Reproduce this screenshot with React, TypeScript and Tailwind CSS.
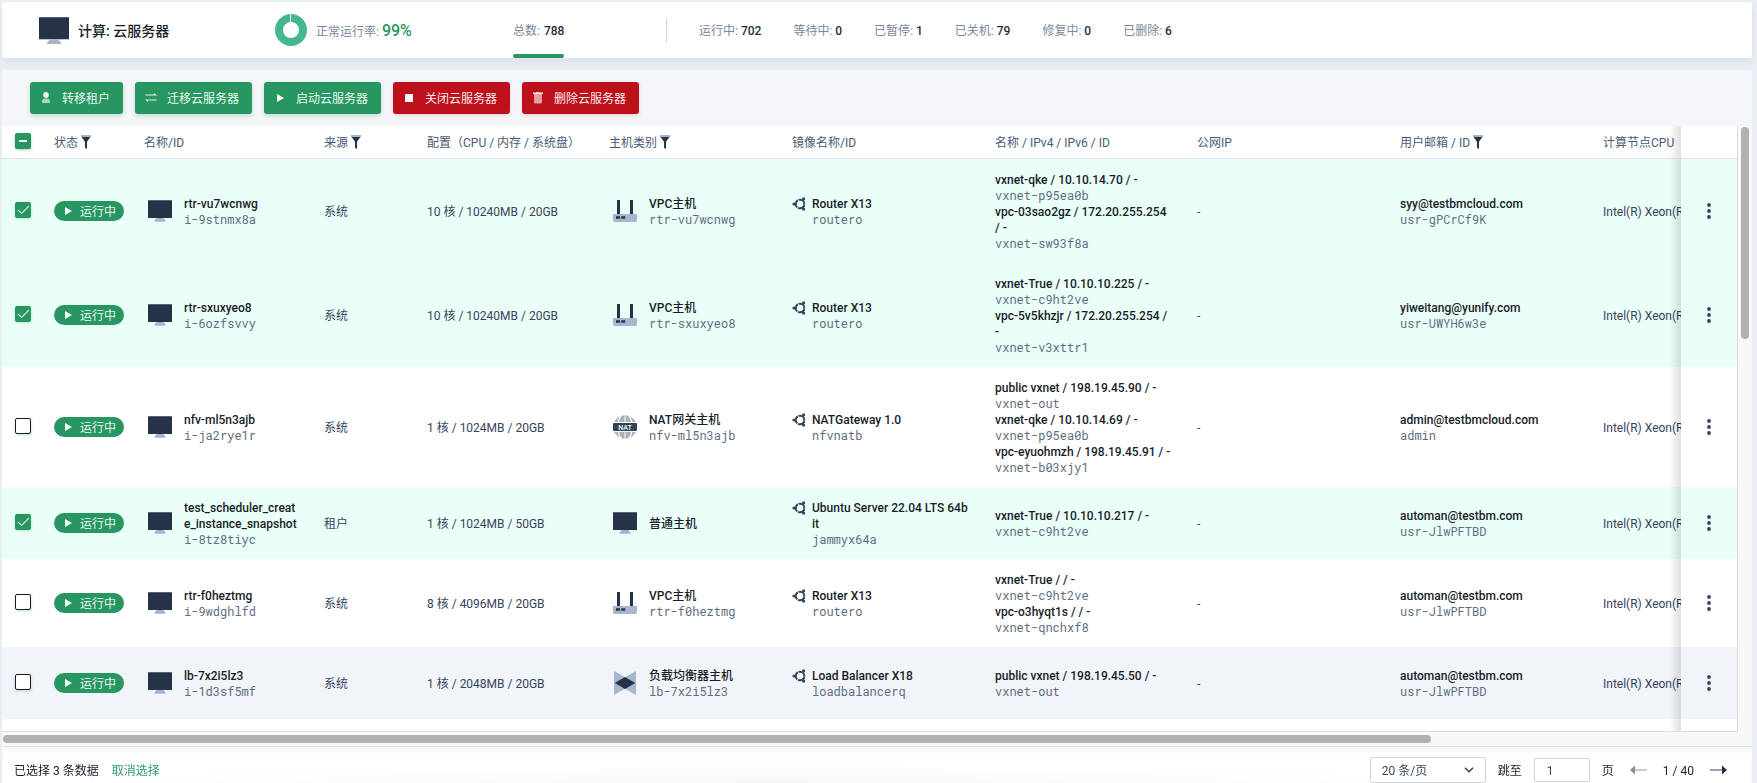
import React, { useState } from "react";

type Net = { label: string; id: string };
type HostKind = "vpc" | "nat" | "normal" | "lb";
type Server = {
  name: string;
  id: string;
  source: string;
  spec: string;
  kind: HostKind;
  kindLabel: string;
  kindId?: string;
  image: string;
  imageId: string;
  nets: Net[];
  user: string;
  userId: string;
};

const servers: Server[] = [
  {
    name: "rtr-vu7wcnwg", id: "i-9stnmx8a", source: "系统", spec: "10 核 / 10240MB / 20GB",
    kind: "vpc", kindLabel: "VPC主机", kindId: "rtr-vu7wcnwg", image: "Router X13", imageId: "routero",
    nets: [
      { label: "vxnet-qke / 10.10.14.70 / -", id: "vxnet-p95ea0b" },
      { label: "vpc-03sao2gz / 172.20.255.254 / -", id: "vxnet-sw93f8a" },
    ],
    user: "syy@testbmcloud.com", userId: "usr-gPCrCf9K",
  },
  {
    name: "rtr-sxuxyeo8", id: "i-6ozfsvvy", source: "系统", spec: "10 核 / 10240MB / 20GB",
    kind: "vpc", kindLabel: "VPC主机", kindId: "rtr-sxuxyeo8", image: "Router X13", imageId: "routero",
    nets: [
      { label: "vxnet-True / 10.10.10.225 / -", id: "vxnet-c9ht2ve" },
      { label: "vpc-5v5khzjr / 172.20.255.254 / -", id: "vxnet-v3xttr1" },
    ],
    user: "yiweitang@yunify.com", userId: "usr-UWYH6w3e",
  },
  {
    name: "nfv-ml5n3ajb", id: "i-ja2rye1r", source: "系统", spec: "1 核 / 1024MB / 20GB",
    kind: "nat", kindLabel: "NAT网关主机", kindId: "nfv-ml5n3ajb", image: "NATGateway 1.0", imageId: "nfvnatb",
    nets: [
      { label: "public vxnet / 198.19.45.90 / -", id: "vxnet-out" },
      { label: "vxnet-qke / 10.10.14.69 / -", id: "vxnet-p95ea0b" },
      { label: "vpc-eyuohmzh / 198.19.45.91 / -", id: "vxnet-b03xjy1" },
    ],
    user: "admin@testbmcloud.com", userId: "admin",
  },
  {
    name: "test_scheduler_create_instance_snapshot", id: "i-8tz8tiyc", source: "租户", spec: "1 核 / 1024MB / 50GB",
    kind: "normal", kindLabel: "普通主机", image: "Ubuntu Server 22.04 LTS 64bit", imageId: "jammyx64a",
    nets: [{ label: "vxnet-True / 10.10.10.217 / -", id: "vxnet-c9ht2ve" }],
    user: "automan@testbm.com", userId: "usr-JlwPFTBD",
  },
  {
    name: "rtr-f0heztmg", id: "i-9wdghlfd", source: "系统", spec: "8 核 / 4096MB / 20GB",
    kind: "vpc", kindLabel: "VPC主机", kindId: "rtr-f0heztmg", image: "Router X13", imageId: "routero",
    nets: [
      { label: "vxnet-True / / -", id: "vxnet-c9ht2ve" },
      { label: "vpc-o3hyqt1s / / -", id: "vxnet-qnchxf8" },
    ],
    user: "automan@testbm.com", userId: "usr-JlwPFTBD",
  },
  {
    name: "lb-7x2i5lz3", id: "i-1d3sf5mf", source: "系统", spec: "1 核 / 2048MB / 20GB",
    kind: "lb", kindLabel: "负载均衡器主机", kindId: "lb-7x2i5lz3", image: "Load Balancer X18", imageId: "loadbalancerq",
    nets: [{ label: "public vxnet / 198.19.45.50 / -", id: "vxnet-out" }],
    user: "automan@testbm.com", userId: "usr-JlwPFTBD",
  },
];

function Monitor({ className }: { className: string }) {
  return (
    <svg viewBox="0 0 30 27" className={className} aria-hidden="true">
      <path d="M0 0h30v22.3H0z" fill="#263246" />
      <path d="M0 0h30v.8H0z" fill="#5d6b80" />
      <path d="M11 22.3h8l3 3.4v1.3H8v-1.3z" fill="#a4b4c8" />
    </svg>
  );
}

function VpcIcon() {
  return (
    <svg viewBox="0 0 24 22" className="h-[22px] w-6 shrink-0" aria-hidden="true">
      <path d="M4 0h3v14H4zM17 0h3v14h-3z" fill="#263246" />
      <path d="M0 14h24v6a2 2 0 0 1-2 2H2a2 2 0 0 1-2-2z" fill="#a4b7ce" />
      <path d="M3 16.2h4v2.6H3zM8.2 16.2h4v2.6h-4z" fill="#263246" />
    </svg>
  );
}

function NatIcon() {
  return (
    <svg viewBox="0 0 24 24" className="h-6 w-6 shrink-0" aria-hidden="true">
      <circle cx="12" cy="12" r="11.8" fill="#a9b1ba" />
      <path d="M8.500 0Q5.400 4 4.800 9M15.500 0Q18.600 4 19.200 9M4.800 15Q5.400 20 8.500 24M19.200 15Q18.600 20 15.500 24" stroke="#fff" strokeWidth="1.300" fill="none" />
      <path d="M12 0v24" stroke="#fff" strokeWidth="1" />
      <path d="M0 7h24v10H0z" fill="#fff" />
      <path d="M1 8h22a1 1 0 0 1 1 1v6a1 1 0 0 1-1 1H1a1 1 0 0 1-1-1V9a1 1 0 0 1 1-1z" fill="#324558" />
      <text x="12" y="14.500" textAnchor="middle" fontSize="7" fontWeight="500" fill="#fff">NAT</text>
    </svg>
  );
}

function LbIcon() {
  return (
    <svg viewBox="0 0 24 24" className="h-6 w-6 shrink-0" aria-hidden="true">
      <path d="M1 0l11 6.200L23 0v24l-11-6.200L1 24z" fill="#a4b7ce" />
      <path d="M12 6l10.200 6L12 18 1.800 12z" fill="#263246" />
    </svg>
  );
}

function UbuntuIcon() {
  return (
    <svg viewBox="0 0 14 14" className="mt-[2px] h-[14px] w-[14px] shrink-0" aria-hidden="true">
      <circle cx="8" cy="7" r="4.300" fill="none" stroke="#324558" strokeWidth="2" strokeDasharray="8.200 .8" strokeDashoffset="-.4" />
      <circle cx="2" cy="7" r="1.600" fill="#324558" />
      <circle cx="11.600" cy="1.900" r="1.600" fill="#324558" />
      <circle cx="11.600" cy="12.100" r="1.600" fill="#324558" />
    </svg>
  );
}

function Funnel() {
  return (
    <svg viewBox="0 0 10 14" className="h-[14px] w-[10px] shrink-0" aria-hidden="true">
      <path d="M0 0h10v2.400H0z" fill="#a4b4c8" />
      <path d="M.6 2h8.800L6 6.800V14l-2-1.200V6.800z" fill="#263246" />
    </svg>
  );
}

function HostIcon({ kind }: { kind: HostKind }) {
  if (kind === "vpc") return <VpcIcon />;
  if (kind === "nat") return <NatIcon />;
  if (kind === "lb") return <LbIcon />;
  return <Monitor className="h-[22px] w-6 shrink-0" />;
}

function ActionIcon({ name }: { name: string }) {
  return (
    <svg viewBox="0 0 16 16" className="h-4 w-4" aria-hidden="true">
      {name === "user" && (
        <>
          <path d="M8 2a2.700 2.700 0 0 1 2.700 2.700v.6a2.700 2.700 0 0 1-5.400 0v-.6A2.700 2.700 0 0 1 8 2z" fill="#fff" fillOpacity=".9" />
          <path d="M4 13v-1.500A3.300 3.300 0 0 1 7.300 8.500h1.400A3.300 3.300 0 0 1 12 11.500V13z" fill="#fff" fillOpacity=".6" />
        </>
      )}
      {name === "swap" && (
        <>
          <path d="M2.500 4.500H11V3l3 2.500H2.500z" fill="#fff" fillOpacity=".9" />
          <path d="M13.500 10.500H5V12L2 9.500h11.500z" fill="#fff" fillOpacity=".9" />
        </>
      )}
      {name === "play" && <path d="M5 4l7 4-7 4z" fill="#fff" />}
      {name === "stop" && <path d="M4 4h8v8H4z" fill="#fff" />}
      {name === "trash" && (
        <>
          <path d="M3 2.500h3.500V2h3v.5H13V4H3z" fill="#fff" fillOpacity=".9" />
          <path d="M4 4h8v8a1.500 1.500 0 0 1-1.500 1.500h-5A1.500 1.500 0 0 1 4 12z" fill="#fff" fillOpacity=".6" />
        </>
      )}
    </svg>
  );
}

const actions = [
  { label: "转移租户", icon: "user", danger: false },
  { label: "迁移云服务器", icon: "swap", danger: false },
  { label: "启动云服务器", icon: "play", danger: false },
  { label: "关闭云服务器", icon: "stop", danger: true },
  { label: "删除云服务器", icon: "trash", danger: true },
];

const stats = [
  ["运行中", "702"],
  ["等待中", "0"],
  ["已暂停", "1"],
  ["已关机", "79"],
  ["修复中", "0"],
  ["已删除", "6"],
];

const columns = [
  { label: "状态", filter: true, width: "w-[90px]" },
  { label: "名称/ID", width: "w-[180px]" },
  { label: "来源", filter: true, width: "w-[103px]" },
  { label: "配置（CPU / 内存 / 系统盘）", width: "w-[182px]" },
  { label: "主机类别", filter: true, width: "w-[183px]" },
  { label: "镜像名称/ID", width: "w-[203px]" },
  { label: "名称 / IPv4 / IPv6 / ID", width: "w-[202px]" },
  { label: "公网IP", width: "w-[203px]" },
  { label: "用户邮箱 / ID", filter: true, width: "w-[203px]" },
  { label: "计算节点CPU", width: "" },
];

const title = "pt-px font-medium text-[#181d28]";
const mono = "font-['Roboto_Mono','Liberation_Mono',monospace] leading-[15px] text-[#5f6d80]";
const plain = "pt-[14px] pb-3 pl-3";
const edge =
  "before:absolute before:inset-y-0 before:-left-3 before:w-3 before:bg-linear-to-r before:from-transparent before:to-black/12 before:content-['']";

function Check({ label, checked, onChange }: { label: string; checked: boolean; onChange: () => void }) {
  return (
    <label className="relative block h-4 w-4">
      <input
        type="checkbox"
        aria-label={label}
        checked={checked}
        onChange={onChange}
        className="block h-4 w-4 appearance-none rounded-[2px] border border-[#181d28] bg-white shadow-[0_1px_3px_rgba(39,150,96,0.3)] checked:border-[#279660] checked:bg-[#279660]"
      />
      {checked && (
        <svg viewBox="0 0 16 16" className="pointer-events-none absolute inset-0 h-4 w-4" aria-hidden="true">
          <path d="M3 8l3.500 3.500L14 4" fill="none" stroke="#d4ece0" strokeWidth="1.100" />
        </svg>
      )}
    </label>
  );
}

export default function App() {
  const [selected, setSelected] = useState<number[]>([0, 1, 3]);
  const toggle = (i: number) =>
    setSelected((s) => (s.includes(i) ? s.filter((x) => x !== i) : [...s, i]));

  return (
    <div className="flex h-screen flex-col gap-3 overflow-hidden bg-[#e9edf4] pt-[2px] pr-[5px] pl-[2px] font-[Roboto,'Noto_Sans_CJK_SC',sans-serif] text-xs leading-4 text-[#36435c]">
      <header className="flex h-14 shrink-0 items-center rounded-[3px] bg-white pl-[37px] shadow-[0_4px_8px_rgba(36,46,66,0.06)]">
        <div className="flex w-[236px] items-center gap-[9px]">
          <Monitor className="h-[27px] w-[30px]" />
          <h1 className="pt-[2px] text-sm font-medium text-[#181d28]">计算: 云服务器</h1>
        </div>
        <div className="flex w-[238px] items-center gap-[9px]">
          <svg viewBox="0 0 32 32" className="h-8 w-8" aria-hidden="true">
            <circle cx="16" cy="16" r="12" fill="none" stroke="#45b78e" strokeWidth="8" />
            <path d="M15.500 0v8" stroke="#fff" strokeWidth="1" />
          </svg>
          <p className="pt-[2px] text-[#79879c]">
            正常运行率: <strong className="text-base font-medium text-[#279660]">99%</strong>
          </p>
        </div>
        <div className="flex w-[153px] self-stretch">
          <a href="#all" className="flex flex-col text-[#79879c]">
            <span className="flex flex-1 items-center gap-1 pt-[6px]">
              总数: <strong className="font-medium text-[#242e42]">788</strong>
            </span>
            <span className="h-1 rounded-full bg-[#279660]" />
          </a>
        </div>
        <ul className="flex items-center gap-8 border-l border-[#ccd3db] pt-[5px] pb-[3px] pl-8">
          {stats.map(([label, value]) => (
            <li key={label} className="text-[#79879c]">
              {label}: <strong className="font-medium text-[#242e42]">{value}</strong>
            </li>
          ))}
        </ul>
      </header>

      <main className="flex min-h-0 flex-1 flex-col bg-white">
        <div className="flex h-14 shrink-0 items-center gap-3 bg-[#f5f6fa] px-7">
          {actions.map((a) => (
            <button
              key={a.label}
              type="button"
              className={
                a.danger
                  ? "flex h-8 items-center gap-2 rounded-[3px] bg-[#bc111b] pr-[13px] pl-2 text-[#fbeaea] shadow-[0_2px_4px_rgba(188,17,27,0.12)]"
                  : "flex h-8 items-center gap-2 rounded-[3px] bg-[#279660] pr-[13px] pl-2 text-[#e9f7f0] shadow-[0_2px_4px_rgba(39,150,96,0.25)]"
              }
            >
              <ActionIcon name={a.icon} />
              <span className="pt-[2px]">{a.label}</span>
            </button>
          ))}
        </div>

        <div className="grid min-h-0 flex-1 grid-cols-[minmax(0,1fr)_14px] grid-rows-[minmax(0,1fr)_14px] bg-[#f8f8f8]">
          <div className="overflow-auto border-r border-b border-[#dcdcdc] bg-white [scrollbar-width:none]">
            <table className="w-full min-w-[2106px] table-fixed border-separate border-spacing-0 text-left">
              <thead>
                <tr>
                  <th className="h-[33px] w-10 border-b border-[#d8dfe6] pb-[2px] pl-[13px]">
                    <label className="relative flex h-4 w-4 items-center justify-center">
                      <input
                        type="checkbox"
                        aria-label="全选"
                        checked={selected.length === servers.length}
                        onChange={() => setSelected(selected.length ? [] : servers.map((_, i) => i))}
                        className="block h-4 w-4 appearance-none rounded-[2px] bg-[#279660] shadow-[0_1px_3px_rgba(39,150,96,0.4)]"
                      />
                      <span className="pointer-events-none absolute h-[2px] w-2 bg-white" />
                    </label>
                  </th>
                  {columns.map((c) => (
                    <th key={c.label} className={`${c.width} border-b border-[#d8dfe6] p-0 pl-3 font-normal text-[#4a5974]`}>
                      <span className="flex items-center gap-[3px] whitespace-nowrap">
                        <span className="pt-[2px]">{c.label}</span>
                        {c.filter && <Funnel />}
                      </span>
                    </th>
                  ))}
                  <th className={`sticky right-0 w-14 border-b border-[#d8dfe6] bg-white ${edge}`} />
                </tr>
              </thead>
              <tbody>
                {servers.map((s, i) => {
                  const on = selected.includes(i);
                  const bg = on ? "bg-[#ebfff9]" : i === 5 ? "bg-[#f1f4f9]" : "bg-white";
                  return (
                    <tr key={s.id} className={bg}>
                      <td className="h-[72px] pt-3 pb-[14px] pl-[13px]">
                        <Check label={s.name} checked={on} onChange={() => toggle(i)} />
                      </td>
                      <td className="py-3 pl-3">
                        <span className="inline-flex h-5 items-center gap-2 rounded-full bg-[#279660] pr-2 pl-[11px] align-middle text-[#e9f7f0]">
                          <svg viewBox="0 0 7 8" className="h-2 w-[7px]" aria-hidden="true">
                            <path d="M0 0l7 4-7 4z" fill="#fff" />
                          </svg>
                          <span className="pt-px">运行中</span>
                        </span>
                      </td>
                      <td className="py-3 pr-3 pl-4">
                        <div className="flex items-center gap-3">
                          <Monitor className="h-[22px] w-6 shrink-0" />
                          <div className="min-w-0 break-all">
                            <div className={title}>{s.name}</div>
                            <div className={mono}>{s.id}</div>
                          </div>
                        </div>
                      </td>
                      <td className={plain}>{s.source}</td>
                      <td className={plain}>{s.spec}</td>
                      <td className="py-3 pr-3 pl-4">
                        <div className="flex items-center gap-3">
                          <HostIcon kind={s.kind} />
                          <div>
                            <div className={title}>{s.kindLabel}</div>
                            {s.kindId && <div className={mono}>{s.kindId}</div>}
                          </div>
                        </div>
                      </td>
                      <td className="py-3 pr-[13px] pl-3">
                        <div className="flex gap-[6px]">
                          <UbuntuIcon />
                          <div className="min-w-0 break-all">
                            <div className={title}>{s.image}</div>
                            <div className={mono}>{s.imageId}</div>
                          </div>
                        </div>
                      </td>
                      <td className="px-3 py-3">
                        {s.nets.map((n) => (
                          <div key={n.label}>
                            <div className={title}>{n.label}</div>
                            <div className={mono}>{n.id}</div>
                          </div>
                        ))}
                      </td>
                      <td className={plain}>-</td>
                      <td className="py-3 pl-3">
                        <div className={title}>{s.user}</div>
                        <div className={mono}>{s.userId}</div>
                      </td>
                      <td className={`${plain} whitespace-nowrap`}>Intel(R) Xeon(R) CPU</td>
                      <td className={`sticky right-0 ${bg} ${edge}`}>
                        <button type="button" aria-label="更多操作" className="mx-auto flex h-6 w-6 items-center justify-center">
                          <svg viewBox="0 0 4 16" className="h-4 w-1" aria-hidden="true">
                            <circle cx="2" cy="2" r="1.900" fill="#36435c" />
                            <circle cx="2" cy="8" r="1.900" fill="#36435c" />
                            <circle cx="2" cy="14" r="1.900" fill="#36435c" />
                          </svg>
                        </button>
                      </td>
                    </tr>
                  );
                })}
                <tr>
                  <td colSpan={11} className="h-3 p-0" />
                  <td className={`sticky right-0 bg-white p-0 ${edge}`} />
                </tr>
              </tbody>
            </table>
          </div>
          <div className="flex justify-center pt-px">
            <div className="h-[35%] w-2 rounded-full bg-[#b1b1b1]" />
          </div>
          <div className="flex items-center pl-px">
            <div className="h-2 w-[82.3%] rounded-full bg-[#b1b1b1]" />
          </div>
        </div>

        <footer className="flex h-[37px] shrink-0 items-end border-t border-[#e0e2e6] bg-[radial-gradient(ellipse_40%_50%_at_44%_100%,rgba(0,0,0,0.03),transparent)] pr-[25px] pl-3 text-[#181d28] shadow-[inset_0_4px_4px_rgba(36,46,66,0.04)]">
          <div className="flex h-[26px] items-center gap-[13px] pt-[2px]">
            <span>已选择 {selected.length} 条数据</span>
            <button type="button" className="text-[#2f9e6c]" onClick={() => setSelected([])}>取消选择</button>
          </div>
          <div className="ml-auto flex h-[26px] items-center gap-3">
            <label className="relative flex items-center">
              <select aria-label="每页条数" defaultValue="20" className="h-[26px] w-[116px] appearance-none rounded-[2px] border border-[#ccd5e0] bg-white pt-[2px] pl-[11px] text-[#36435c]">
                <option value="20">20 条/页</option>
              </select>
              <svg viewBox="0 0 10 6" className="pointer-events-none absolute right-3 h-[6px] w-[10px]" aria-hidden="true">
                <path d="M1 .8l4 4 4-4" fill="none" stroke="#36435c" strokeWidth="1.500" />
              </svg>
            </label>
            <label htmlFor="page" className="pt-[2px]">跳至</label>
            <input id="page" type="text" defaultValue="1" className="h-6 w-14 rounded-[2px] border border-[#ccd5e0] bg-white pt-[2px] pl-3 text-[#36435c]" />
            <span className="pt-[2px]">页</span>
            <button type="button" aria-label="上一页" className="ml-1">
              <svg viewBox="0 0 17 10" className="h-[10px] w-[17px]" aria-hidden="true">
                <path d="M4 4h13v2H4z" fill="#c8cbd1" />
                <path d="M0 5l5-4.500v9z" fill="#868c97" />
              </svg>
            </button>
            <span className="ml-1 pt-[2px]">1 / 40</span>
            <button type="button" aria-label="下一页" className="ml-1">
              <svg viewBox="0 0 17 10" className="h-[10px] w-[17px]" aria-hidden="true">
                <path d="M0 4h13v2H0z" fill="#9aa0ac" />
                <path d="M17 5l-5-4.500v9z" fill="#242e42" />
              </svg>
            </button>
          </div>
        </footer>
      </main>
    </div>
  );
}
